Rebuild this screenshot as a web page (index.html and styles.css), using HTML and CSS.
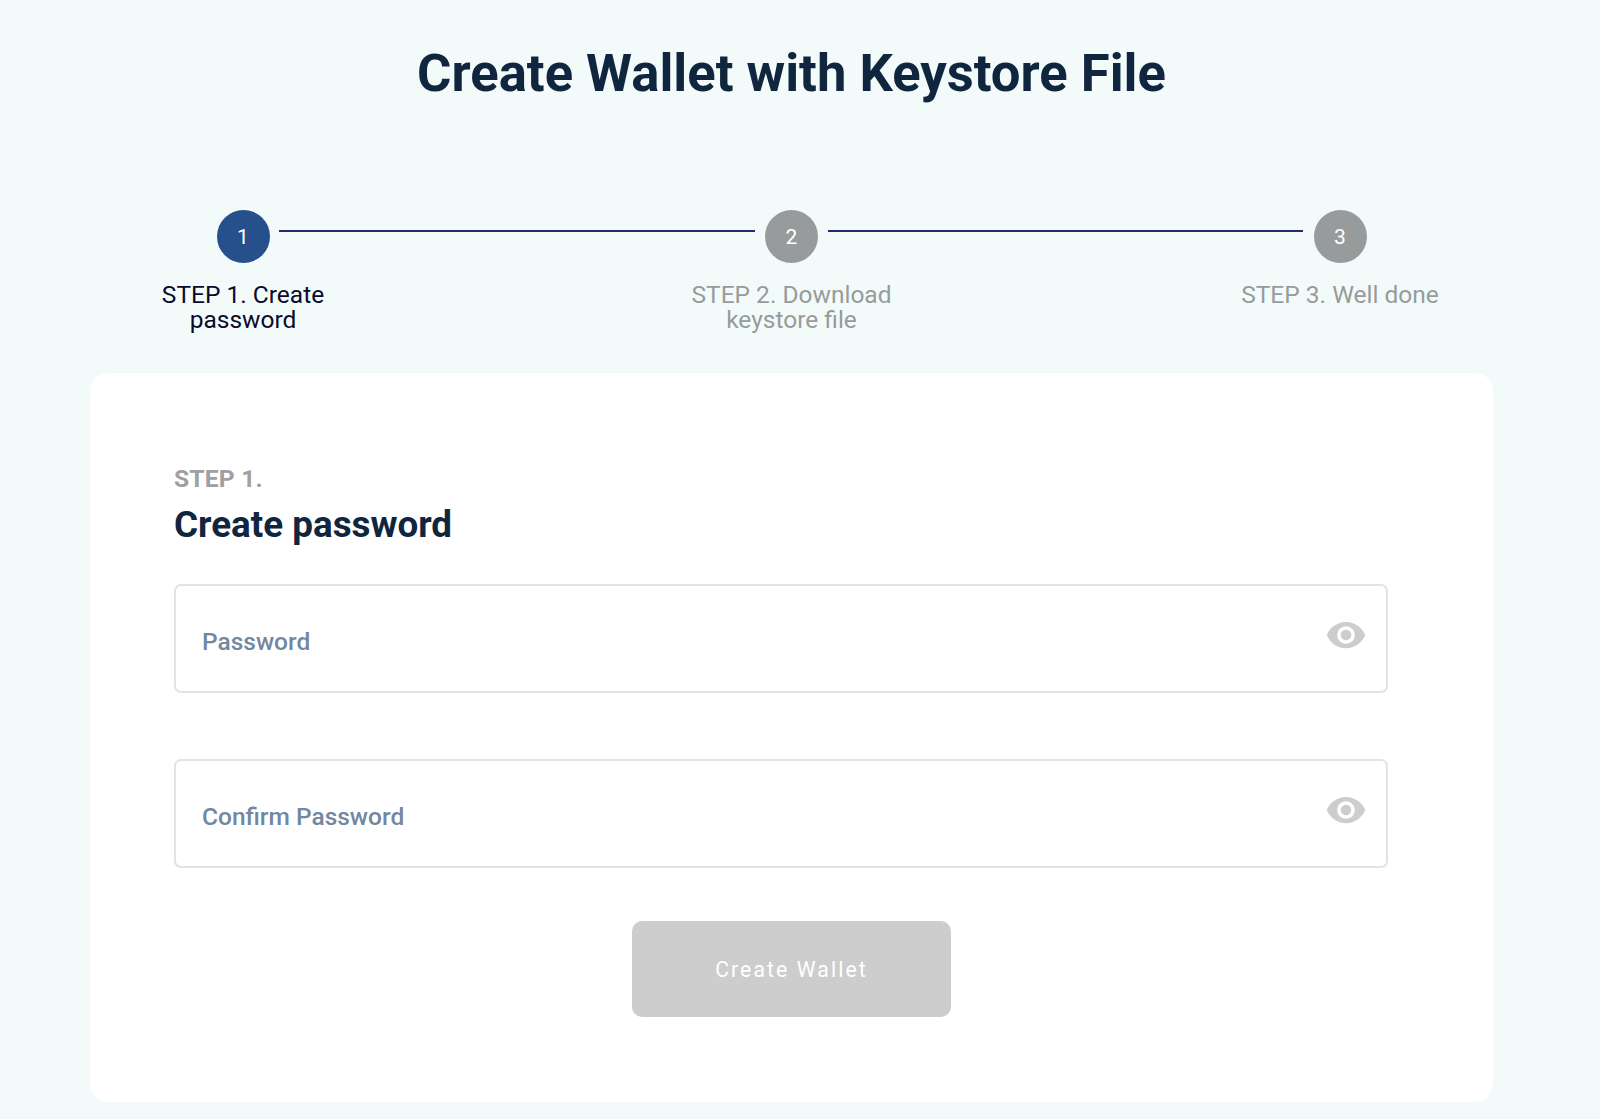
FILE: index.html
```
<!DOCTYPE html>
<html lang="en">
<head>
    <meta charset="UTF-8">
    <meta name="viewport" content="width=device-width, initial-scale=1.0">
    <title>Create Wallet with Keystore File</title>
    <link rel="stylesheet" href="styles.css">
</head>
<body>

<div class="container">
    <h1>Create Wallet with Keystore File</h1>

    <div class="stepper">
        <div class="step active">
            <div class="step-number">1</div>
            <div class="step-label">STEP 1. Create password</div>
        </div>
        <div class="step-line"></div>
        <div class="step">
            <div class="step-number">2</div>
            <div class="step-label">STEP 2. Download keystore file</div>
        </div>
        <div class="step-line"></div>
        <div class="step">
            <div class="step-number">3</div>
            <div class="step-label">STEP 3. Well done</div>
        </div>
    </div>

    <form class="card">
        <div class="card-step">STEP 1.</div>
        <h2>Create password</h2>

        <div class="field">
            <input type="password" placeholder="Password">
            <svg class="eye" viewBox="0 0 24 24"><path d="M12 4.5C7 4.5 2.73 7.61 1 12c1.73 4.39 6 7.5 11 7.5s9.27-3.11 11-7.5c-1.73-4.39-6-7.5-11-7.5zM12 17c-2.76 0-5-2.24-5-5s2.24-5 5-5 5 2.24 5 5-2.24 5-5 5zm0-8c-1.66 0-3 1.34-3 3s1.34 3 3 3 3-1.34 3-3-1.34-3-3-3z"/></svg>
        </div>

        <div class="field">
            <input type="password" placeholder="Confirm Password">
            <svg class="eye" viewBox="0 0 24 24"><path d="M12 4.5C7 4.5 2.73 7.61 1 12c1.73 4.39 6 7.5 11 7.5s9.27-3.11 11-7.5c-1.73-4.39-6-7.5-11-7.5zM12 17c-2.76 0-5-2.24-5-5s2.24-5 5-5 5 2.24 5 5-2.24 5-5 5zm0-8c-1.66 0-3 1.34-3 3s1.34 3 3 3 3-1.34 3-3-1.34-3-3-3z"/></svg>
        </div>

        <button class="button" type="button" disabled>Create Wallet</button>
    </form>
</div>

</body>
</html>
```
FILE: styles.css
```
* {
    box-sizing: border-box;
}
body {
    margin: 0;
    background-color: #f2fbfa;
    font-family: Roboto, sans-serif;
    color: #10253e;
}
.container {
    width: 1403px;
    margin-left: 90px;
    padding-top: 42px;
}
h1 {
    margin: 0;
    font-size: 52.6px;
    font-weight: 700;
    line-height: 62px;
    text-align: center;
}

/* Stepper */
.stepper {
    display: flex;
    height: 163px;
    margin: 106px 43px 0 43px;
}
.step {
    display: flex;
    flex-direction: column;
    align-items: center;
    flex: 0 0 220px;
    color: #979b9b;
}
.step-number {
    width: 53px;
    height: 53px;
    border-radius: 50%;
    background-color: #979b9b;
    color: #fff;
    font-size: 21px;
    line-height: 54px;
    text-align: center;
}
.step-label {
    margin-top: 20px;
    font-size: 24.5px;
    line-height: 24.5px;
    text-align: center;
}
.step.active {
    color: #0a0a2c;
}
.step.active .step-number {
    background-color: #25508c;
}
.step-line {
    flex: 1;
    height: 2px;
    margin: 20px -73px 0 -74px;
    background-color: #232a70;
}

/* Card */
.card {
    display: flex;
    flex-direction: column;
    height: 729px;
    padding: 91px 105px 0 84px;
    border-radius: 18px;
    background-color: #fff;
}
.card-step {
    color: #a0a0a0;
    font-size: 24.6px;
    font-weight: 700;
    line-height: 30px;
    letter-spacing: 0.2px;
}
h2 {
    margin: 9px 0 37px;
    font-size: 36.8px;
    font-weight: 700;
    line-height: 44px;
}
.field {
    display: flex;
    align-items: center;
    height: 109px;
    margin-bottom: 66px;
    padding: 0 19px 0 26px;
    border: 2px solid #e2e3e4;
    border-radius: 7px;
}
.field input {
    flex: 1;
    padding: 7px 0 0;
    border: none;
    outline: none;
    background: none;
    color: #10253e;
    font: 500 24.5px/30px Roboto, sans-serif;
}
.field input::placeholder {
    color: #73879f;
    opacity: 1;
}
.eye {
    width: 42px;
    height: 42px;
    margin-top: -7px;
    fill: #cdcdcd;
}
.button {
    width: 319px;
    height: 96px;
    margin: -13px 0 0 458px;
    border: none;
    border-radius: 10px;
    background-color: #cdcdcd;
    color: #fff;
    font: 400 21.2px Roboto, sans-serif;
    letter-spacing: 2.1px;
}
```
